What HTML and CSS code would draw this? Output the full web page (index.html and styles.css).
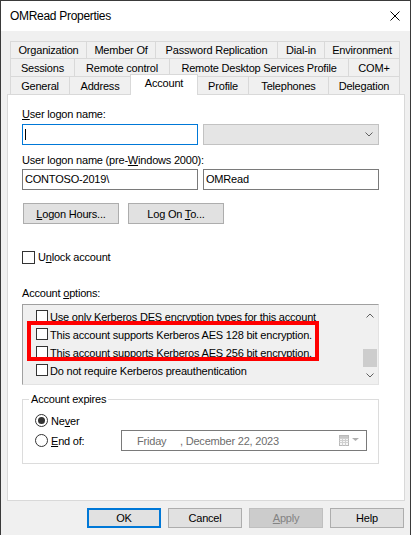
FILE: index.html
```html
<!DOCTYPE html>
<html>
<head>
<meta charset="utf-8">
<title>OMRead Properties</title>
<link rel="stylesheet" href="styles.css">
</head>
<body>
<div class="window">
  <div class="titlebar">
    <span class="title">OMRead Properties</span>
    <svg class="close" width="10" height="10" viewBox="0 0 10 10"><path d="M0.5 0.5L9.5 9.5M9.5 0.5L0.5 9.5" stroke="#000" stroke-width="1" fill="none"/></svg>
  </div>
  <div class="client">
    <div class="tabs">
      <div class="tabrow row1">
        <div class="tab">Organization</div>
        <div class="tab">Member Of</div>
        <div class="tab">Password Replication</div>
        <div class="tab">Dial-in</div>
        <div class="tab last">Environment</div>
      </div>
      <div class="tabrow row2">
        <div class="tab">Sessions</div>
        <div class="tab">Remote control</div>
        <div class="tab">Remote Desktop Services Profile</div>
        <div class="tab last">COM+</div>
      </div>
      <div class="tabrow row3">
        <div class="tab">General</div>
        <div class="tab">Address</div>
        <div class="tab selected">Account</div>
        <div class="tab">Profile</div>
        <div class="tab">Telephones</div>
        <div class="tab last">Delegation</div>
      </div>
    </div>

    <div class="panel">
      <div class="label l1"><u>U</u>ser logon name:</div>
      <div class="fieldrow">
        <div class="textbox focused"><span class="caret"></span></div>
        <div class="combo">
          <svg width="8" height="5" viewBox="0 0 8 5"><path d="M0.5 0.5L4 4L7.5 0.5" stroke="#606060" stroke-width="1" fill="none"/></svg>
        </div>
      </div>
      <div class="label l2">User logon name (pre-<u>W</u>indows 2000):</div>
      <div class="fieldrow r2">
        <div class="textbox">CONTOSO-2019\</div>
        <div class="textbox">OMRead</div>
      </div>
      <div class="btnrow">
        <div class="btn"><span><u>L</u>ogon Hours...</span></div>
        <div class="btn"><span>Log On <u>T</u>o...</span></div>
      </div>
      <div class="check-row unlock"><span class="checkbox"></span><span>U<u>n</u>lock account</span></div>
      <div class="label l3">Account <u>o</u>ptions:</div>
      <div class="listbox">
        <div class="items">
          <div class="item"><span class="checkbox small"></span><span>Use only Kerberos DES encryption types for this account</span></div>
          <div class="item"><span class="checkbox small"></span><span>This account supports Kerberos AES 128 bit encryption.</span></div>
          <div class="item"><span class="checkbox small"></span><span>This account supports Kerberos AES 256 bit encryption.</span></div>
          <div class="item"><span class="checkbox small"></span><span>Do not require Kerberos preauthentication</span></div>
        </div>
        <div class="scrollbar">
          <div class="arrow up"><svg width="8" height="5" viewBox="0 0 8 5"><path d="M0.5 4.5L4 1L7.5 4.5" stroke="#606060" stroke-width="1" fill="none"/></svg></div>
          <div class="track"><div class="thumb"></div></div>
          <div class="arrow down"><svg width="8" height="5" viewBox="0 0 8 5"><path d="M0.5 0.5L4 4L7.5 0.5" stroke="#606060" stroke-width="1" fill="none"/></svg></div>
        </div>
        <div class="highlight"></div>
      </div>
      <fieldset class="expires">
        <legend>Account expires</legend>
        <div class="radio-row first"><span class="radio checked"></span><span class="radio-label">Ne<u>v</u>er</span></div>
        <div class="radio-row"><span class="radio"></span><span class="radio-label"><u>E</u>nd of:</span>
          <div class="datepicker">
            <span class="dp-day">Friday</span><span>, December 22, 2023</span>
            <svg class="dp-icon" width="22" height="11" viewBox="0 0 22 11">
              <rect x="0.5" y="0.5" width="9" height="10" fill="#f6f6f6" stroke="#b9b9b9"/>
              <path d="M0.5 3.5H9.5M0.5 5.5H9.5M0.5 7.5H9.5M3.5 3.5V10.5M6.5 3.5V10.5" stroke="#d0d0d0" stroke-width="1"/>
              <rect x="1" y="1" width="8" height="2" fill="#c8c8c8"/>
              <path d="M13 3L20 3L16.5 6Z" fill="#b0b0b0"/>
            </svg>
          </div>
        </div>
      </fieldset>
    </div>

    <div class="footer">
      <div class="btn fbtn default"><span>OK</span></div>
      <div class="btn fbtn"><span>Cancel</span></div>
      <div class="btn fbtn disabled"><span><u>A</u>pply</span></div>
      <div class="btn fbtn"><span>Help</span></div>
    </div>
  </div>
</div>
</body>
</html>
```

FILE: styles.css
```css
* { box-sizing: border-box; }
html, body { margin: 0; padding: 0; }
body {
  font-family: "Liberation Sans", Arial, sans-serif;
  font-size: 11px;
  letter-spacing: -0.2px;
  color: #000;
  background: #f0f0f0;
}
u { text-underline-offset: 1px; }

.window {
  width: 411px;
  height: 535px;
  border: 1px solid #3a3a3a;
  border-bottom: none;
  background: #f0f0f0;
  display: flex;
  flex-direction: column;
}

.titlebar {
  height: 30px;
  background: #fff;
  display: flex;
  align-items: center;
  padding: 0 10px 0 9px;
  flex-shrink: 0;
}
.title { flex: 1; font-size: 12px; letter-spacing: -0.3px; }
.close { display: block; }

.client { flex: 1; display: flex; flex-direction: column; }

/* tabs */
.tabs { margin: 10px 0 0 9px; width: 390px; }
.tabrow { display: grid; grid-template-rows: 18px; }
.row1 { grid-template-columns: 76px 69px 122px 47px 76px; grid-template-rows: 17px; }
.row2 { grid-template-columns: 64px 95px 179px 52px; }
.row3 { grid-template-columns: 59px 61px 67px 51px 80px 72px; }
.tab {
  border-top: 1px solid #d9d9d9;
  border-left: 1px solid #d9d9d9;
  display: flex;
  align-items: center;
  justify-content: center;
  white-space: nowrap;
}
.tab.last { border-right: 1px solid #d9d9d9; }
.tab.selected {
  background: #fff;
  border-right: 1px solid #d9d9d9;
  position: relative;
  z-index: 1;
  height: 21px;
  margin: -2px -1px 0 0;
  align-self: start;
  padding-bottom: 4px;
}

/* panel */
.panel {
  margin-left: 6px;
  width: 398px;
  height: 407px;
  border: 1px solid #d9d9d9;
  background: #fff;
  padding-left: 14px;
  flex-shrink: 0;
}
.label { line-height: 14px; height: 14px; white-space: nowrap; }
.l1 { margin-top: 12px; }
.l2 { margin-top: 8px; }
.l3 { margin-top: 22px; }

.fieldrow { display: flex; gap: 5px; margin-top: 3px; height: 21px; }
.fieldrow.r2 { margin-top: 2px; }
.textbox {
  width: 176px;
  height: 21px;
  border: 1px solid #7a7a7a;
  background: #fff;
  padding-left: 2px;
  line-height: 19px;
  white-space: nowrap;
}
.textbox.focused { border-color: #0078d7; display: flex; align-items: center; }
.caret { display: block; width: 1px; height: 11px; background: #000; }
.combo {
  width: 176px;
  height: 21px;
  border: 1px solid #c2c2c2;
  background: #e5e5e5;
  display: flex;
  align-items: center;
  justify-content: flex-end;
  padding-right: 5px;
}
.combo svg { display: block; }

.btn {
  height: 21px;
  border: 1px solid #adadad;
  background: #e1e1e1;
  display: flex;
  align-items: center;
  justify-content: center;
  white-space: nowrap;
}
.btnrow { display: flex; gap: 9px; margin: 13px 0 0 1px; }
.btnrow .btn { width: 96px; }

.check-row { display: flex; align-items: center; height: 13px; line-height: 13px; }
.unlock { margin-top: 27px; gap: 3px; }
.checkbox {
  display: block;
  width: 13px;
  height: 13px;
  border: 1px solid #333;
  background: #fff;
  flex-shrink: 0;
}
.checkbox.small { width: 12px; height: 12px; margin-top: 2px; margin-right: 1px; }

/* list */
.listbox {
  position: relative;
  margin-top: 4px;
  width: 357px;
  height: 81px;
  border: 1px solid;
  border-color: #a0a0a0 #e3e3e3 #e3e3e3 #a0a0a0;
  background: #f0f0f0;
  display: flex;
}
.items { flex: 1; padding-top: 3px; overflow: hidden; }
.item {
  height: 18px;
  display: flex;
  align-items: flex-start;
  padding-left: 13px;
  gap: 1px;
  line-height: 18px;
  white-space: nowrap;
}
.scrollbar { width: 17px; display: flex; flex-direction: column; }
.arrow { height: 17px; display: flex; align-items: center; justify-content: center; }
.arrow svg { display: block; }
.arrow.up { padding-top: 3px; }
.track { flex: 1; display: flex; flex-direction: column; justify-content: flex-end; }
.thumb { height: 18px; margin: 0 1px 0 2px; background: #cdcdcd; }
.highlight {
  position: absolute;
  left: 4px;
  top: 16px;
  width: 292px;
  height: 40px;
  border: 4px solid #f00;
}

/* group */
.expires {
  margin: 7px 0 0 0;
  padding: 0 0 12px 12px;
  width: 357px;
  border: 1px solid #dcdcdc;
  min-width: 0;
}
.expires legend {
  padding: 0 2px;
  margin-left: -6px;
  line-height: 14px;
}
.radio-row { display: flex; align-items: center; height: 21px; }
.radio-row.first { height: 17px; margin-top: 6px; margin-bottom: 1px; }
.radio {
  display: block;
  width: 13px;
  height: 13px;
  border: 1px solid #333;
  border-radius: 50%;
  background: #fff;
  flex-shrink: 0;
  margin-right: 3px;
  position: relative;
}
.radio.checked::after {
  content: "";
  position: absolute;
  left: 2px;
  top: 2px;
  width: 7px;
  height: 7px;
  border-radius: 50%;
  background: #333;
}
.radio-row .radio-label { width: 70px; white-space: nowrap; }
.datepicker {
  width: 246px;
  height: 21px;
  border: 1px solid #7a7a7a;
  background: #fff;
  color: #6d6d6d;
  display: flex;
  align-items: center;
  padding-left: 15px;
  padding-right: 5px;
  white-space: nowrap;
}
.dp-day { width: 43px; }
.dp-icon { margin-left: auto; display: block; }

/* footer */
.footer {
  display: flex;
  justify-content: flex-end;
  gap: 7px;
  padding: 7px 6px 0 0;
}
.fbtn { width: 74px; height: 20px; }
.fbtn.default { border: 2px solid #0078d7; }
.fbtn.disabled { background: #cccccc; border-color: #bfbfbf; color: #838383; }
```
